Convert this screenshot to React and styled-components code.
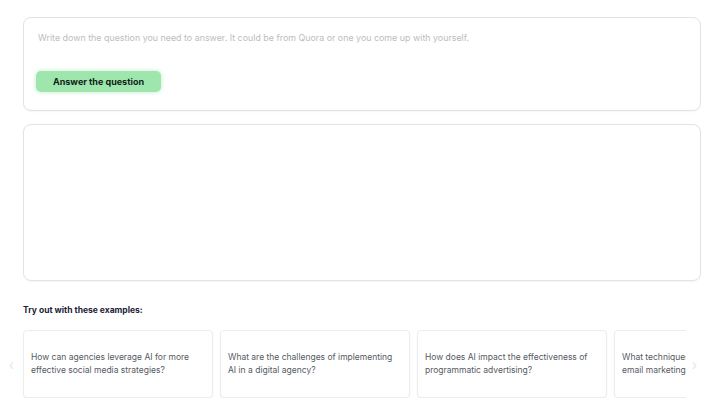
import React from "react";
import styled, { createGlobalStyle } from "styled-components";

const examples = [
  "How can agencies leverage AI for more effective social media strategies?",
  "What are the challenges of implementing AI in a digital agency?",
  "How does AI impact the effectiveness of programmatic advertising?",
  "What techniques can AI offer to improve email marketing campaigns?",
];

const GlobalStyle = createGlobalStyle`
  body {
    margin: 0;
    background: #fff;
    font-family: "Inter", "Noto Sans", sans-serif;
  }
`;

const Page = styled.div`
  padding: 17px 19px 0 23px;
  display: flex;
  flex-direction: column;
`;

const Card = styled.div`
  border: 1px solid #e3e3e3;
  border-radius: 8px;
  background: #fff;
  box-shadow: 0 1px 2px rgba(0, 0, 0, 0.04);
`;

const QuestionCard = styled(Card)`
  height: 94px;
  box-sizing: border-box;
  padding: 14px 14px 0 14px;
  display: flex;
  flex-direction: column;
`;

const Input = styled.textarea`
  border: none;
  outline: none;
  resize: none;
  height: 34px;
  padding: 0;
  font-family: inherit;
  font-size: 8.9px;
  color: #333;
  &::placeholder {
    color: #bdbdbd;
  }
`;

const AnswerButton = styled.button`
  align-self: flex-start;
  margin: 5px 0 0 -2px;
  height: 21px;
  width: 125px;
  border: none;
  border-radius: 5px;
  background: #9fe6ae;
  box-shadow: 0 0 4px rgba(120, 220, 140, 0.5);
  font-family: inherit;
  font-size: 9px;
  font-weight: 700;
  color: #0f1e14;
  cursor: pointer;
`;

const OutputCard = styled(Card)`
  margin-top: 13px;
  height: 157px;
  box-sizing: border-box;
`;

const Heading = styled.h4`
  margin: 24px 0 0;
  font-size: 8.5px;
  font-weight: 700;
  color: #1c2236;
`;

const Carousel = styled.div`
  display: flex;
  align-items: center;
  margin: 15px 0 0 -23px;
`;

const Arrow = styled.span`
  width: ${(p) => p.w}px;
  flex: none;
  text-align: center;
  font-size: 14px;
  color: #e6e6e6;
`;

const Track = styled.div`
  flex: none;
  width: 663px;
  overflow: hidden;
  display: flex;
  gap: 7px;
`;

const ExampleCard = styled(Card)`
  flex: none;
  width: 190px;
  height: 68px;
  box-sizing: border-box;
  border-color: #ececec;
  border-radius: 4px;
  padding: 0 7px;
  display: flex;
  align-items: center;
  font-size: 8.5px;
  line-height: 13px;
  color: #555a63;
`;

export default function App() {
  return (
    <>
      <GlobalStyle />
      <Page>
        <QuestionCard>
          <Input placeholder="Write down the question you need to answer. It could be from Quora or one you come up with yourself." />
          <AnswerButton>Answer the question</AnswerButton>
        </QuestionCard>
        <OutputCard />
        <Heading>Try out with these examples:</Heading>
        <Carousel>
          <Arrow w={23}>‹</Arrow>
          <Track>
            {examples.map((q) => (
              <ExampleCard key={q}>{q}</ExampleCard>
            ))}
          </Track>
          <Arrow w={17}>›</Arrow>
        </Carousel>
      </Page>
    </>
  );
}
